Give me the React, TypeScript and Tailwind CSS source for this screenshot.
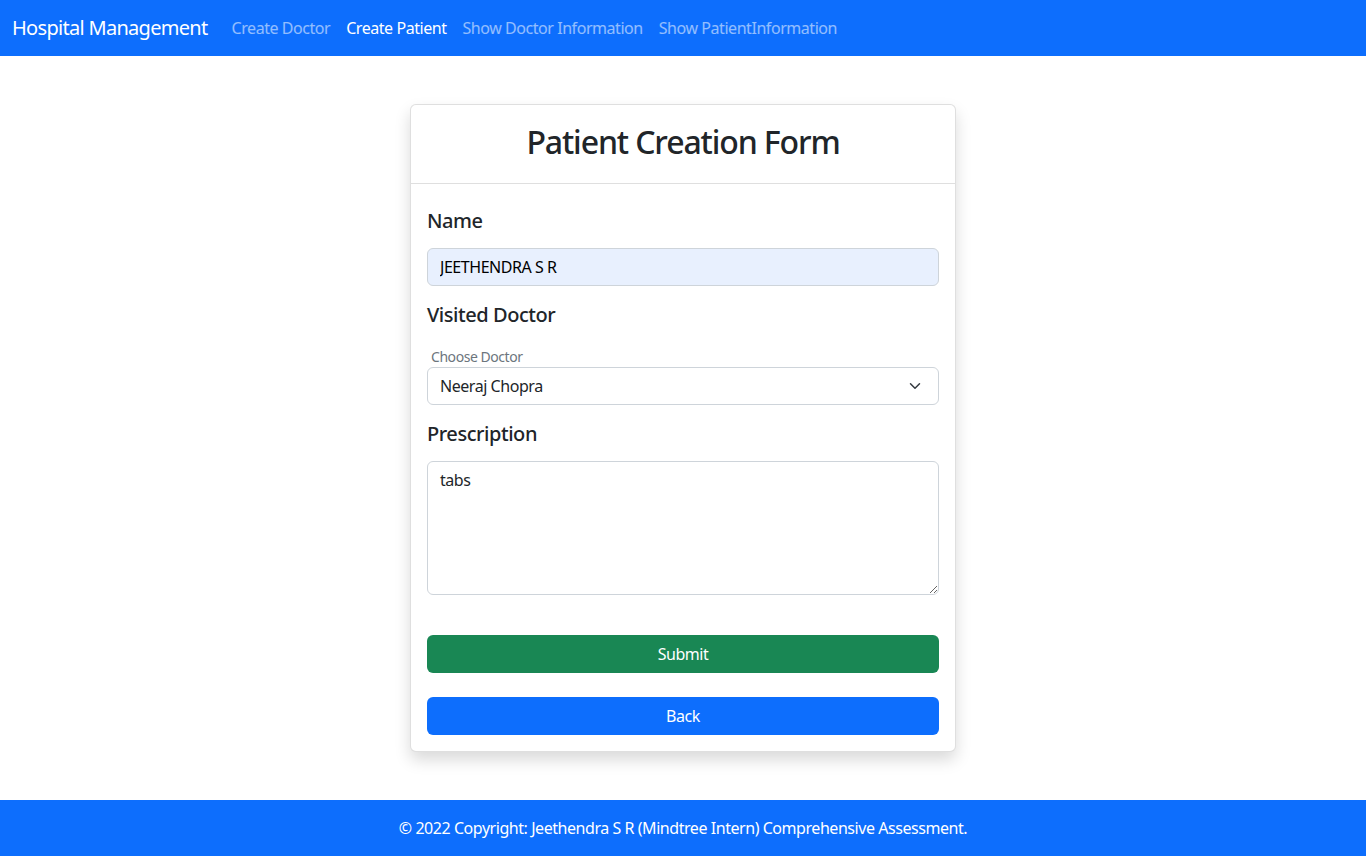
import { useState } from "react";

const font = "font-['Segoe_UI','Noto_Sans',sans-serif] tracking-[-0.028em]";

const navLinks = [
  { label: "Create Doctor", active: false },
  { label: "Create Patient", active: true },
  { label: "Show Doctor Information", active: false },
  { label: "Show PatientInformation", active: false },
];

function Navbar() {
  return (
    <nav className="flex h-14 items-center bg-[#0d6efd] px-3">
      <span className="mr-4 text-[20px] leading-[30px] tracking-[-0.035em] text-white">Hospital Management</span>
      <ul className="flex items-center">
        {navLinks.map((link) => (
          <li key={link.label}>
            <a
              href="#"
              className={
                link.active
                  ? "block px-2 py-2 text-base text-white"
                  : "block px-2 py-2 text-base text-white/55"
              }
            >
              {link.label}
            </a>
          </li>
        ))}
      </ul>
    </nav>
  );
}

function PatientForm() {
  const [name, setName] = useState("JEETHENDRA S R");
  const [doctor, setDoctor] = useState("Neeraj Chopra");
  const [prescription, setPrescription] = useState("tabs");

  return (
    <div className="w-[546px] rounded-md border border-black/[0.125] bg-white shadow-[0_8px_16px_rgba(0,0,0,0.15)]">
      <div className="flex h-[79px] items-center justify-center border-b border-black/[0.125] pb-1">
        <h2 className="text-[32px] font-medium leading-none tracking-[-0.035em] text-[#212529]">
          Patient Creation Form
        </h2>
      </div>
      <form className="flex flex-col px-4 pb-4 pt-[25px]" onSubmit={(e) => e.preventDefault()}>
        <h5 className="mb-[15px] text-[20px] font-medium leading-6 text-[#212529]">Name</h5>
        <input
          value={name}
          onChange={(e) => setName(e.target.value)}
          className="h-[38px] w-full rounded-md border border-[#ced4da] bg-[#e8f0fe] px-3 text-base tracking-[-0.028em] text-black outline-none"
        />

        <h5 className="mb-[20px] mt-[17px] text-[20px] font-medium leading-6 text-[#212529]">Visited Doctor</h5>
        <label className="pl-1 text-sm leading-5 text-[#6c757d]">Choose Doctor</label>
        <div className="relative">
          <select
            value={doctor}
            onChange={(e) => setDoctor(e.target.value)}
            className="h-[38px] w-full appearance-none rounded-md border border-[#ced4da] bg-white px-3 text-base tracking-[-0.028em] text-[#212529] outline-none"
          >
            <option>Neeraj Chopra</option>
            <option>Other Doctor</option>
          </select>
          <svg
            className="pointer-events-none absolute right-4 top-1/2 -translate-y-1/2"
            width="16"
            height="12"
            viewBox="0 0 16 16"
            fill="none"
            stroke="#343a40"
            strokeWidth="2"
            strokeLinecap="round"
            strokeLinejoin="round"
          >
            <path d="m2 5 6 6 6-6" />
          </svg>
        </div>

        <h5 className="mb-[15px] mt-[17px] text-[20px] font-medium leading-6 text-[#212529]">Prescription</h5>
        <textarea
          value={prescription}
          onChange={(e) => setPrescription(e.target.value)}
          className="h-[134px] w-full rounded-md border border-[#ced4da] bg-white px-3 py-[6px] text-base tracking-[-0.028em] text-[#212529] outline-none"
        />

        <button
          type="submit"
          className="mt-10 h-[38px] w-full rounded-md bg-[#198754] text-base tracking-[-0.028em] text-white"
        >
          Submit
        </button>
        <button
          type="button"
          className="mt-6 h-[38px] w-full rounded-md bg-[#0d6efd] text-base tracking-[-0.028em] text-white"
        >
          Back
        </button>
      </form>
    </div>
  );
}

export default function App() {
  return (
    <div className={`${font} flex min-h-[856px] flex-col bg-white`}>
      <Navbar />
      <main className="flex flex-1 justify-center pb-12 pt-12">
        <PatientForm />
      </main>
      <footer className="flex h-14 items-center justify-center bg-[#0d6efd] text-base text-white">
        © 2022 Copyright: Jeethendra S R (Mindtree Intern) Comprehensive Assessment.
      </footer>
    </div>
  );
}
